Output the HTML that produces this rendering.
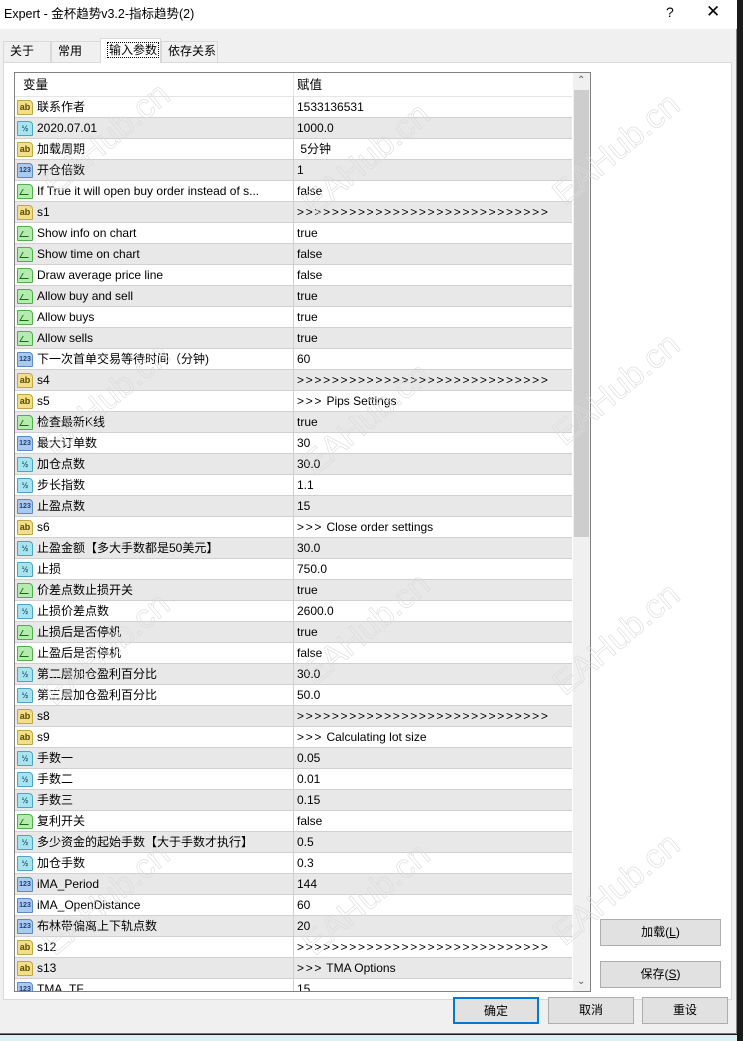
<!DOCTYPE html>
<html><head><meta charset="utf-8"><style>
*{box-sizing:border-box;margin:0;padding:0}
body{width:743px;height:1041px;overflow:hidden;background:#1a1a1a;font-family:"Liberation Sans","Noto Sans CJK SC",sans-serif;font-size:12px;color:#000;position:relative}
#win{position:absolute;left:0;top:0;width:737px;height:1034px;background:#f0f0f0;border-right:1px solid #888;border-bottom:1px solid #777}
#title{position:absolute;left:0;top:0;width:737px;height:29px;background:#fff}
#title .t{position:absolute;left:4px;top:0;line-height:29px;font-size:12.5px}
#title .q{position:absolute;left:666px;top:4px;font-size:14px}
#title .x{position:absolute;left:706px;top:2px;font-size:17px;font-weight:300}
.tab{position:absolute;top:41px;height:21px;border:1px solid #d9d9d9;border-bottom:none;background:#f0f0f0;padding-left:6px;line-height:19px;font-size:12px}
#panel{position:absolute;left:3px;top:62px;width:729px;height:938px;background:#fff;border:1px solid #d9d9d9}
#tbl{position:absolute;left:14px;top:72px;width:577px;height:920px;border:1px solid #828282;background:#fff;overflow:hidden}
.row{position:absolute;left:0;width:557px;height:21px;border-bottom:1px solid #d0d0d0;white-space:nowrap;line-height:20px}
.row.g{background:#e8e8e8}
.row .n{position:absolute;left:22px;top:0;height:20px;line-height:20px}
.row .v{position:absolute;left:282px;top:0;height:20px;line-height:20px}
.ch{letter-spacing:1.7px}
.row .d{position:absolute;left:278px;top:0;width:1px;height:21px;background:#d0d0d0}
.hd{position:absolute;left:0;top:0;width:557px;height:24px;border-bottom:1px solid #e5e5e5}
.hd span{position:absolute;top:0;line-height:24px;font-size:12.5px}
.ic{position:absolute;left:2px;top:3px;width:16px;height:15px;border-radius:1px 4px 1px 1px;font-size:8px;line-height:13px;text-align:center;font-weight:bold;font-style:normal}
.ab{background:#f3df8a;border:1px solid #c2a645;color:#5a4a00;font-size:9px}
.n3{background:#a9c9ee;border:1px solid #5b8ac4;color:#1d3f7a;font-size:7px}
.hf{background:#a8e4f0;border:1px solid #4aa6c0;color:#1d5870;font-size:8px}
.bo{background:#b5eab0;border:1px solid #4fb04a}
.bo:after{content:"";position:absolute;left:3px;top:4px;width:8px;height:5px;border-left:1.5px solid #186a12;border-bottom:1.5px solid #186a12;transform:skewX(-30deg)}
#sb{position:absolute;left:558px;top:0;width:17px;height:918px;background:#f0f0f0}
#sb .th{position:absolute;left:1px;top:17px;width:15px;height:447px;background:#cdcdcd}
#sb .u{position:absolute;left:4px;top:2px;font-size:10px;color:#606060}
#sb .dn{position:absolute;left:4px;top:903px;font-size:10px;color:#606060}
.btn{position:absolute;height:27px;background:#e1e1e1;border:1px solid #adadad;text-align:center;line-height:25px;font-size:12px}
.wm{position:absolute;color:transparent;-webkit-text-stroke:0.6px #dadada;font-size:34px;transform:rotate(-40deg);font-family:"Liberation Sans",sans-serif;white-space:nowrap}
</style></head><body>
<div id="win">
<div id="title"><span class="t">Expert - 金杯趋势v3.2-指标趋势(2)</span><span class="q">?</span><span class="x">✕</span></div>
<div class="tab" style="left:3px;width:48px">关于</div>
<div class="tab" style="left:51px;width:50px">常用</div>
<div class="tab" style="left:100px;top:38px;height:25px;width:61px;background:#fff;z-index:2;line-height:22px"><span style="border:1px dotted #000;padding:0 1px">输入参数</span></div>
<div class="tab" style="left:161px;width:57px">依存关系</div>
<div id="panel"></div>
<div id="tbl">
<div class="hd"><span style="left:8px">变量</span><span style="left:282px">赋值</span><div style="position:absolute;left:278px;top:0;width:1px;height:24px;background:#e5e5e5"></div></div>
<div class="row" style="top:24px"><i class="ic ab">ab</i><span class="n">联系作者</span><div class="d"></div><span class="v">1533136531</span></div>
<div class="row g" style="top:45px"><i class="ic hf">½</i><span class="n">2020.07.01</span><div class="d"></div><span class="v">1000.0</span></div>
<div class="row" style="top:66px"><i class="ic ab">ab</i><span class="n">加载周期</span><div class="d"></div><span class="v">&nbsp;5分钟</span></div>
<div class="row g" style="top:87px"><i class="ic n3">123</i><span class="n">开仓倍数</span><div class="d"></div><span class="v">1</span></div>
<div class="row" style="top:108px"><i class="ic bo"></i><span class="n">If True it will open buy order instead of s...</span><div class="d"></div><span class="v">false</span></div>
<div class="row g" style="top:129px"><i class="ic ab">ab</i><span class="n">s1</span><div class="d"></div><span class="v ch">&gt;&gt;&gt;&gt;&gt;&gt;&gt;&gt;&gt;&gt;&gt;&gt;&gt;&gt;&gt;&gt;&gt;&gt;&gt;&gt;&gt;&gt;&gt;&gt;&gt;&gt;&gt;&gt;&gt;</span></div>
<div class="row" style="top:150px"><i class="ic bo"></i><span class="n">Show info on chart</span><div class="d"></div><span class="v">true</span></div>
<div class="row g" style="top:171px"><i class="ic bo"></i><span class="n">Show time on chart</span><div class="d"></div><span class="v">false</span></div>
<div class="row" style="top:192px"><i class="ic bo"></i><span class="n">Draw average price line</span><div class="d"></div><span class="v">false</span></div>
<div class="row g" style="top:213px"><i class="ic bo"></i><span class="n">Allow buy and sell</span><div class="d"></div><span class="v">true</span></div>
<div class="row" style="top:234px"><i class="ic bo"></i><span class="n">Allow buys</span><div class="d"></div><span class="v">true</span></div>
<div class="row g" style="top:255px"><i class="ic bo"></i><span class="n">Allow sells</span><div class="d"></div><span class="v">true</span></div>
<div class="row" style="top:276px"><i class="ic n3">123</i><span class="n">下一次首单交易等待时间（分钟)</span><div class="d"></div><span class="v">60</span></div>
<div class="row g" style="top:297px"><i class="ic ab">ab</i><span class="n">s4</span><div class="d"></div><span class="v ch">&gt;&gt;&gt;&gt;&gt;&gt;&gt;&gt;&gt;&gt;&gt;&gt;&gt;&gt;&gt;&gt;&gt;&gt;&gt;&gt;&gt;&gt;&gt;&gt;&gt;&gt;&gt;&gt;&gt;</span></div>
<div class="row" style="top:318px"><i class="ic ab">ab</i><span class="n">s5</span><div class="d"></div><span class="v"><span class="ch">&gt;&gt;&gt;</span> Pips Settings</span></div>
<div class="row g" style="top:339px"><i class="ic bo"></i><span class="n">检查最新K线</span><div class="d"></div><span class="v">true</span></div>
<div class="row" style="top:360px"><i class="ic n3">123</i><span class="n">最大订单数</span><div class="d"></div><span class="v">30</span></div>
<div class="row g" style="top:381px"><i class="ic hf">½</i><span class="n">加仓点数</span><div class="d"></div><span class="v">30.0</span></div>
<div class="row" style="top:402px"><i class="ic hf">½</i><span class="n">步长指数</span><div class="d"></div><span class="v">1.1</span></div>
<div class="row g" style="top:423px"><i class="ic n3">123</i><span class="n">止盈点数</span><div class="d"></div><span class="v">15</span></div>
<div class="row" style="top:444px"><i class="ic ab">ab</i><span class="n">s6</span><div class="d"></div><span class="v"><span class="ch">&gt;&gt;&gt;</span> Close order settings</span></div>
<div class="row g" style="top:465px"><i class="ic hf">½</i><span class="n">止盈金额【多大手数都是50美元】</span><div class="d"></div><span class="v">30.0</span></div>
<div class="row" style="top:486px"><i class="ic hf">½</i><span class="n">止损</span><div class="d"></div><span class="v">750.0</span></div>
<div class="row g" style="top:507px"><i class="ic bo"></i><span class="n">价差点数止损开关</span><div class="d"></div><span class="v">true</span></div>
<div class="row" style="top:528px"><i class="ic hf">½</i><span class="n">止损价差点数</span><div class="d"></div><span class="v">2600.0</span></div>
<div class="row g" style="top:549px"><i class="ic bo"></i><span class="n">止损后是否停机</span><div class="d"></div><span class="v">true</span></div>
<div class="row" style="top:570px"><i class="ic bo"></i><span class="n">止盈后是否停机</span><div class="d"></div><span class="v">false</span></div>
<div class="row g" style="top:591px"><i class="ic hf">½</i><span class="n">第二层加仓盈利百分比</span><div class="d"></div><span class="v">30.0</span></div>
<div class="row" style="top:612px"><i class="ic hf">½</i><span class="n">第三层加仓盈利百分比</span><div class="d"></div><span class="v">50.0</span></div>
<div class="row g" style="top:633px"><i class="ic ab">ab</i><span class="n">s8</span><div class="d"></div><span class="v ch">&gt;&gt;&gt;&gt;&gt;&gt;&gt;&gt;&gt;&gt;&gt;&gt;&gt;&gt;&gt;&gt;&gt;&gt;&gt;&gt;&gt;&gt;&gt;&gt;&gt;&gt;&gt;&gt;&gt;</span></div>
<div class="row" style="top:654px"><i class="ic ab">ab</i><span class="n">s9</span><div class="d"></div><span class="v"><span class="ch">&gt;&gt;&gt;</span> Calculating lot size</span></div>
<div class="row g" style="top:675px"><i class="ic hf">½</i><span class="n">手数一</span><div class="d"></div><span class="v">0.05</span></div>
<div class="row" style="top:696px"><i class="ic hf">½</i><span class="n">手数二</span><div class="d"></div><span class="v">0.01</span></div>
<div class="row g" style="top:717px"><i class="ic hf">½</i><span class="n">手数三</span><div class="d"></div><span class="v">0.15</span></div>
<div class="row" style="top:738px"><i class="ic bo"></i><span class="n">复利开关</span><div class="d"></div><span class="v">false</span></div>
<div class="row g" style="top:759px"><i class="ic hf">½</i><span class="n">多少资金的起始手数【大于手数才执行】</span><div class="d"></div><span class="v">0.5</span></div>
<div class="row" style="top:780px"><i class="ic hf">½</i><span class="n">加仓手数</span><div class="d"></div><span class="v">0.3</span></div>
<div class="row g" style="top:801px"><i class="ic n3">123</i><span class="n">iMA_Period</span><div class="d"></div><span class="v">144</span></div>
<div class="row" style="top:822px"><i class="ic n3">123</i><span class="n">iMA_OpenDistance</span><div class="d"></div><span class="v">60</span></div>
<div class="row g" style="top:843px"><i class="ic n3">123</i><span class="n">布林带偏离上下轨点数</span><div class="d"></div><span class="v">20</span></div>
<div class="row" style="top:864px"><i class="ic ab">ab</i><span class="n">s12</span><div class="d"></div><span class="v ch">&gt;&gt;&gt;&gt;&gt;&gt;&gt;&gt;&gt;&gt;&gt;&gt;&gt;&gt;&gt;&gt;&gt;&gt;&gt;&gt;&gt;&gt;&gt;&gt;&gt;&gt;&gt;&gt;&gt;</span></div>
<div class="row g" style="top:885px"><i class="ic ab">ab</i><span class="n">s13</span><div class="d"></div><span class="v"><span class="ch">&gt;&gt;&gt;</span> TMA Options</span></div>
<div class="row" style="top:906px"><i class="ic n3">123</i><span class="n">TMA_TF</span><div class="d"></div><span class="v">15</span></div>
<div id="sb"><div class="th"></div><span class="u">⌃</span><span class="dn">⌄</span></div>
</div>
<div class="wm" style="left:30px;top:120px">EAHub.cn</div>
<div class="wm" style="left:290px;top:140px">EAHub.cn</div>
<div class="wm" style="left:540px;top:130px">EAHub.cn</div>
<div class="wm" style="left:30px;top:380px">EAHub.cn</div>
<div class="wm" style="left:290px;top:400px">EAHub.cn</div>
<div class="wm" style="left:540px;top:370px">EAHub.cn</div>
<div class="wm" style="left:30px;top:630px">EAHub.cn</div>
<div class="wm" style="left:290px;top:610px">EAHub.cn</div>
<div class="wm" style="left:540px;top:620px">EAHub.cn</div>
<div class="wm" style="left:30px;top:880px">EAHub.cn</div>
<div class="wm" style="left:290px;top:880px">EAHub.cn</div>
<div class="wm" style="left:540px;top:870px">EAHub.cn</div>
<div class="btn" style="left:600px;top:919px;width:121px">加载(<u>L</u>)</div>
<div class="btn" style="left:600px;top:961px;width:121px">保存(<u>S</u>)</div>
<div class="btn" style="left:453px;top:997px;width:86px;border:2px solid #0078d7">确定</div>
<div class="btn" style="left:548px;top:997px;width:86px">取消</div>
<div class="btn" style="left:642px;top:997px;width:86px">重设</div>
</div>
<div style="position:absolute;left:0;top:1035px;width:737px;height:6px;background:#dceff3"></div>
</body></html>
